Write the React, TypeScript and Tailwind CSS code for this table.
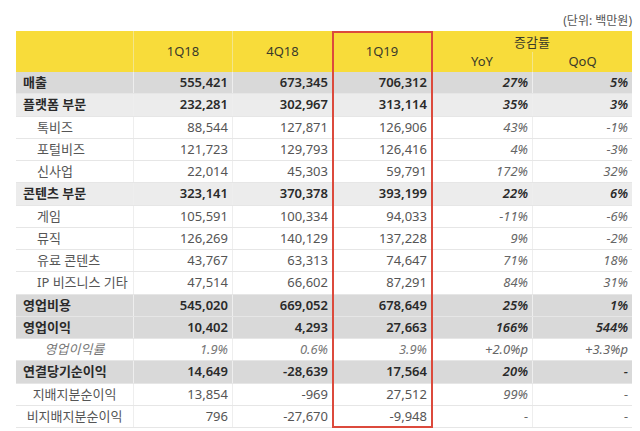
import React from 'react';

type Row = {
  label: string;
  kind: 'main' | 'sub' | 'ratio' | 'center';
  bg: 'dark' | 'light' | 'white';
  v: [string, string, string];
  yoy: string;
  qoq: string;
};

const rows: Row[] = [
  { label: '매출', kind: 'main', bg: 'dark', v: ['555,421', '673,345', '706,312'], yoy: '27%', qoq: '5%' },
  { label: '플랫폼 부문', kind: 'main', bg: 'light', v: ['232,281', '302,967', '313,114'], yoy: '35%', qoq: '3%' },
  { label: '톡비즈', kind: 'sub', bg: 'white', v: ['88,544', '127,871', '126,906'], yoy: '43%', qoq: '-1%' },
  { label: '포털비즈', kind: 'sub', bg: 'white', v: ['121,723', '129,793', '126,416'], yoy: '4%', qoq: '-3%' },
  { label: '신사업', kind: 'sub', bg: 'white', v: ['22,014', '45,303', '59,791'], yoy: '172%', qoq: '32%' },
  { label: '콘텐츠 부문', kind: 'main', bg: 'light', v: ['323,141', '370,378', '393,199'], yoy: '22%', qoq: '6%' },
  { label: '게임', kind: 'sub', bg: 'white', v: ['105,591', '100,334', '94,033'], yoy: '-11%', qoq: '-6%' },
  { label: '뮤직', kind: 'sub', bg: 'white', v: ['126,269', '140,129', '137,228'], yoy: '9%', qoq: '-2%' },
  { label: '유료 콘텐츠', kind: 'sub', bg: 'white', v: ['43,767', '63,313', '74,647'], yoy: '71%', qoq: '18%' },
  { label: 'IP 비즈니스 기타', kind: 'sub', bg: 'white', v: ['47,514', '66,602', '87,291'], yoy: '84%', qoq: '31%' },
  { label: '영업비용', kind: 'main', bg: 'dark', v: ['545,020', '669,052', '678,649'], yoy: '25%', qoq: '1%' },
  { label: '영업이익', kind: 'main', bg: 'dark', v: ['10,402', '4,293', '27,663'], yoy: '166%', qoq: '544%' },
  { label: '영업이익률', kind: 'ratio', bg: 'white', v: ['1.9%', '0.6%', '3.9%'], yoy: '+2.0%p', qoq: '+3.3%p' },
  { label: '연결당기순이익', kind: 'main', bg: 'dark', v: ['14,649', '-28,639', '17,564'], yoy: '20%', qoq: '-' },
  { label: '지배지분순이익', kind: 'center', bg: 'white', v: ['13,854', '-969', '27,512'], yoy: '99%', qoq: '-' },
  { label: '비지배지분순이익', kind: 'center', bg: 'white', v: ['796', '-27,670', '-9,948'], yoy: '-', qoq: '-' },
];

const bgClass = {
  dark: 'bg-[#d9d9d9]',
  light: 'bg-[#ececec]',
  white: 'bg-white',
};

const cols = 'grid grid-cols-[118px_99px_100px_99px_101px_99px]';

export default function App() {
  return (
    <div className="w-[640px] h-[431px] bg-white overflow-hidden font-['Noto_Sans','Noto_Sans_CJK_KR',sans-serif] text-[#333]">
      <div className="h-[31px] flex items-end justify-end pr-[8px] pb-[1px] text-[12px] text-[#555]">
        (단위: 백만원)
      </div>
      <div className="relative ml-[16px] w-[616px]">
        {/* header */}
        <div className={`${cols} grid-rows-[21px_20px] bg-[#f8dc3a] text-[13px] text-[#3a3a2a]`}>
          <div className="row-span-2 border-r border-[#f3e68a]" />
          <div className="row-span-2 flex items-center justify-center border-r border-[#f3e68a]">1Q18</div>
          <div className="row-span-2 flex items-center justify-center border-r border-[#f3e68a]">4Q18</div>
          <div className="row-span-2 flex items-center justify-center border-r border-[#f3e68a]">1Q19</div>
          <div className="col-span-2 flex items-end justify-center">증감률</div>
          <div className="flex items-center justify-center border-r border-[#f3e68a]">YoY</div>
          <div className="flex items-center justify-center">QoQ</div>
        </div>

        {/* body */}
        {rows.map((r, i) => {
          const bold = r.kind === 'main';
          const italicLabel = r.kind === 'ratio';
          const numColor = bold ? 'text-[#2a2a2a] font-semibold' : 'text-[#555]';
          const pctColor = bold ? 'text-[#2a2a2a] font-semibold' : 'text-[#666]';
          return (
            <div
              key={i}
              className={`${cols} h-[22.25px] text-[13px] leading-none ${bgClass[r.bg]} border-b border-[#e6e6e6]`}
            >
              <div
                className={`flex items-center border-r border-[#eeeeee] ${
                  r.kind === 'main'
                    ? 'pl-[7px] font-semibold text-[#2a2a2a]'
                    : r.kind === 'sub'
                    ? 'pl-[21px] text-[#555]'
                    : 'justify-center text-[#555]'
                } ${italicLabel ? 'italic text-[#777]' : ''}`}
              >
                {r.label}
              </div>
              {r.v.map((x, j) => (
                <div
                  key={j}
                  className={`flex items-center justify-end pr-[4px] border-r border-[#eeeeee] ${numColor} ${
                    italicLabel ? 'italic text-[#777]' : ''
                  }`}
                >
                  {x}
                </div>
              ))}
              <div className={`flex items-center justify-end pr-[4px] italic border-r border-[#eeeeee] ${pctColor}`}>
                {r.yoy}
              </div>
              <div className={`flex items-center justify-end pr-[4px] italic ${pctColor}`}>{r.qoq}</div>
            </div>
          );
        })}

        {/* highlight box around 1Q19 */}
        <div className="absolute left-[316px] top-0 w-[101px] h-[397px] border-2 border-[#dc4a3c] pointer-events-none" />
      </div>
    </div>
  );
}
